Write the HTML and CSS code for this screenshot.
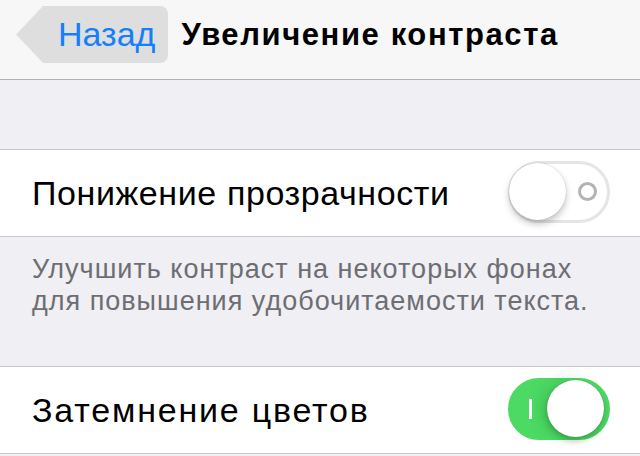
FILE: index.html
```html
<!DOCTYPE html>
<html>
<head>
    <title>Увеличение контраста</title>
    <link rel="stylesheet" href="styles.css">
</head>
<body>
    <div class="navbar">
        <div class="back-btn">Назад</div>
        <div class="nav-title">Увеличение контраста</div>
    </div>

    <div class="group-gap"></div>

    <div class="cell">
        <div class="cell-label">Понижение прозрачности</div>
        <div class="switch">
            <div class="switch-knob"></div>
            <div class="switch-ring"></div>
        </div>
    </div>

    <div class="group-footer">
        Улучшить контраст на некоторых фонах<br>
        для повышения удобочитаемости текста.
    </div>

    <div class="cell">
        <div class="cell-label wide">Затемнение цветов</div>
        <div class="switch on">
            <div class="switch-bar"></div>
            <div class="switch-knob"></div>
        </div>
    </div>
</body>
</html>
```

FILE: styles.css
```css
body {
    margin: 0;
    background-color: #efeff4;
    font-family: "Liberation Sans", Arial, sans-serif;
    overflow: hidden;
}
.navbar {
    display: flex;
    align-items: center;
    height: 80px;
    padding-left: 16px;
    background-color: #f7f7f7;
    border-bottom: 1px solid #b2b2b2;
    box-sizing: border-box;
}
.back-btn {
    height: 57px;
    margin-top: -10px;
    padding: 0 13px 0 42px;
    display: flex;
    align-items: center;
    background-color: #dedede;
    border-radius: 8px;
    clip-path: polygon(27px 0, 100% 0, 100% 100%, 27px 100%, 0 50%);
    color: #157efb;
    font-size: 34px;
}
.nav-title {
    margin-left: 13px;
    margin-top: -9px;
    font-size: 31px;
    font-weight: bold;
    letter-spacing: 1.6px;
    color: #000;
    white-space: nowrap;
}
.group-gap {
    height: 69px;
}
.cell {
    display: flex;
    align-items: center;
    justify-content: space-between;
    height: 88px;
    padding: 0 30px 0 32px;
    background-color: #fff;
    border-top: 1px solid #c8c7cc;
    border-bottom: 1px solid #c8c7cc;
    box-sizing: border-box;
}
.cell-label {
    font-size: 34px;
    letter-spacing: 0.6px;
    color: #000;
}
.cell-label.wide {
    letter-spacing: 1.8px;
}
.switch {
    position: relative;
    width: 102px;
    height: 62px;
    margin-top: -3px;
    border: 3px solid #e5e5e5;
    border-radius: 31px;
    box-sizing: border-box;
    display: flex;
    align-items: center;
}
.switch-knob {
    width: 57px;
    height: 57px;
    margin-left: -2px;
    border-radius: 50%;
    background-color: #fff;
    box-shadow: 0 4px 7px rgba(0,0,0,0.24), 0 0 1px rgba(0,0,0,0.25);
}
.switch-ring {
    width: 13px;
    height: 13px;
    margin-left: 12px;
    border: 3px solid #b3b3b3;
    border-radius: 50%;
}
.switch.on {
    background-color: #4cd964;
    border-color: #4cd964;
}
.switch.on .switch-knob {
    margin-left: 15px;
    box-shadow: 0 4px 6px rgba(0,0,0,0.2), 0 0 1px rgba(0,0,0,0.3), -8px 0 12px rgba(40,150,60,0.25);
}
.switch-bar {
    width: 3px;
    height: 20px;
    margin-left: 18px;
    background-color: #fff;
}
.group-footer {
    height: 129px;
    padding: 16px 32px 0;
    box-sizing: border-box;
    font-size: 27px;
    line-height: 32px;
    letter-spacing: 1px;
    color: #6d6d72;
}
```
